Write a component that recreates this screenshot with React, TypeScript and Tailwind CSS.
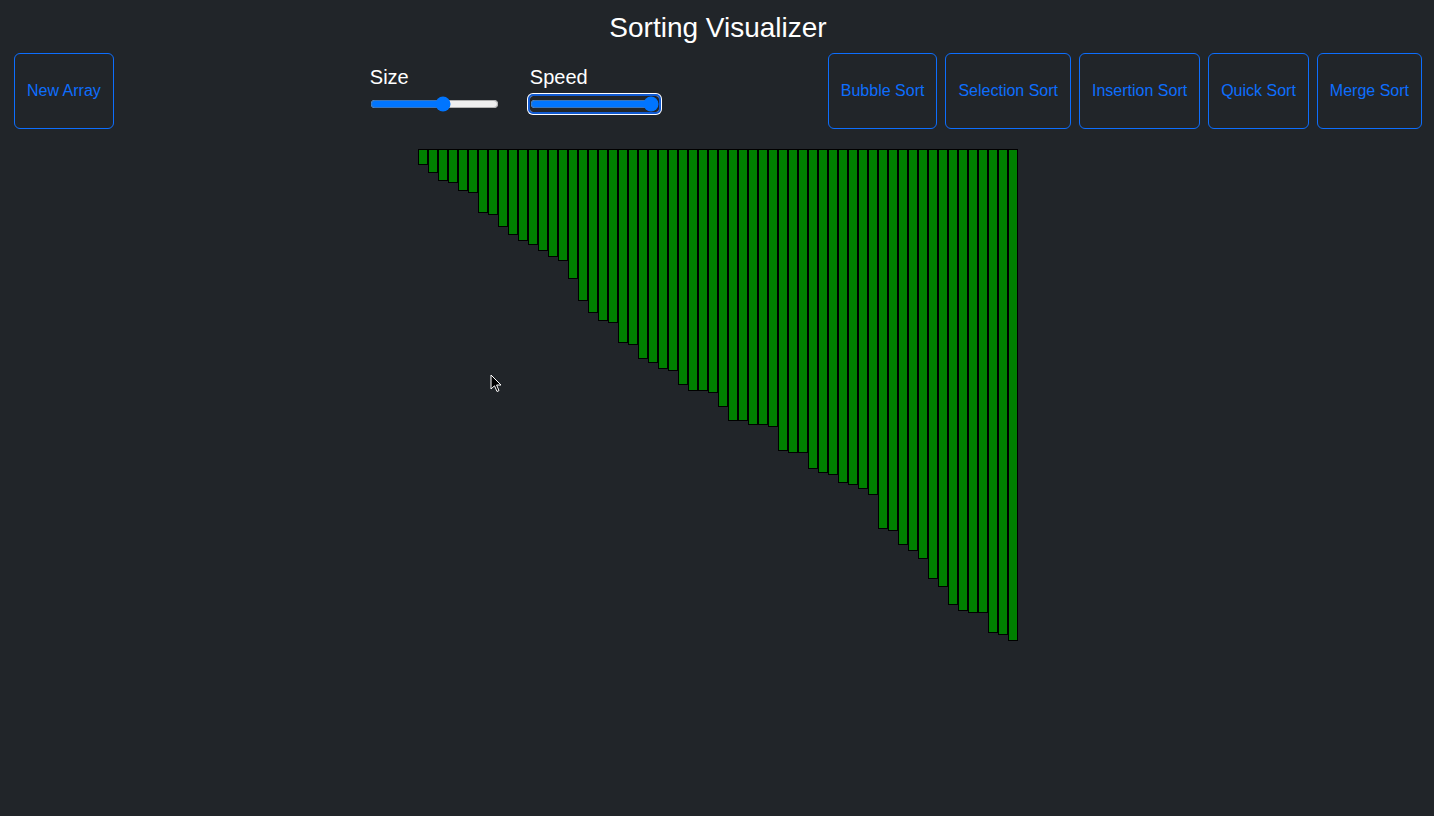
import { useState } from "react";

// heights in px (border included), left to right
const BARS = [
  16, 24, 32, 34, 42, 44, 64, 66, 78, 86, 92, 96, 102, 108, 112, 130, 152, 164,
  172, 174, 194, 196, 210, 214, 220, 222, 236, 242, 242, 244, 258, 272, 272, 276,
  276, 278, 302, 304, 304, 320, 324, 326, 334, 336, 340, 346, 380, 382, 396, 402,
  410, 430, 438, 456, 462, 464, 464, 484, 486, 492,
];

const SORTS = [
  "Bubble Sort",
  "Selection Sort",
  "Insertion Sort",
  "Quick Sort",
  "Merge Sort",
];

export default function App() {
  const [bars] = useState<number[]>(BARS);

  return (
    <div className="relative min-h-screen bg-[#212529] font-['Liberation_Sans',Arial,sans-serif] text-white">
      <h1 className="pt-[11px] pl-[2px] text-center text-[28px] leading-[1.2] font-normal">
        Sorting Visualizer
      </h1>

      <div className="mt-2 flex items-start pl-[14px] pr-[12px]">
        <button className="h-[76px] rounded-md border border-[#0d6efd] px-3 text-base text-[#0d6efd]">
          New Array
        </button>

        <div className="ml-[256px] flex pt-3">
          <div className="w-[160px]">
            <h5 className="mb-[7px] text-[20px] leading-[1.2]">Size</h5>
            <input
              type="range"
              min={5}
              max={100}
              defaultValue={60}
              className="block h-4 w-[129px]"
            />
          </div>
          <div>
            <h5 className="mb-[7px] text-[20px] leading-[1.2]">Speed</h5>
            <input
              type="range"
              min={1}
              max={100}
              defaultValue={100}
              className="block h-4 w-[129px] rounded-[3px] outline-2 outline-[#1059d0] shadow-[0_0_0_3px_#ffffff]"
            />
          </div>
        </div>

        <div className="ml-auto flex gap-2">
          {SORTS.map((s) => (
            <button
              key={s}
              className="h-[76px] rounded-md border border-[#0d6efd] px-3 text-base text-[#0d6efd]"
            >
              {s}
            </button>
          ))}
        </div>
      </div>

      <div className="mt-5 flex items-start justify-center pl-px">
        {bars.map((h, i) => (
          <div
            key={i}
            className="w-[10px] border border-black bg-[#008000]"
            style={{ height: h }}
          />
        ))}
      </div>

      {/* mouse pointer */}
      <svg
        className="absolute left-[490px] top-[374px]"
        width="12"
        height="19"
        viewBox="0 0 12 19"
      >
        <path
          d="M1 1 L1 15 L4.5 11.8 L7 17.5 L9 16.6 L6.6 11 L11 11 Z"
          fill="#000"
          stroke="#fff"
          strokeWidth="1"
          strokeLinejoin="round"
        />
      </svg>
    </div>
  );
}
